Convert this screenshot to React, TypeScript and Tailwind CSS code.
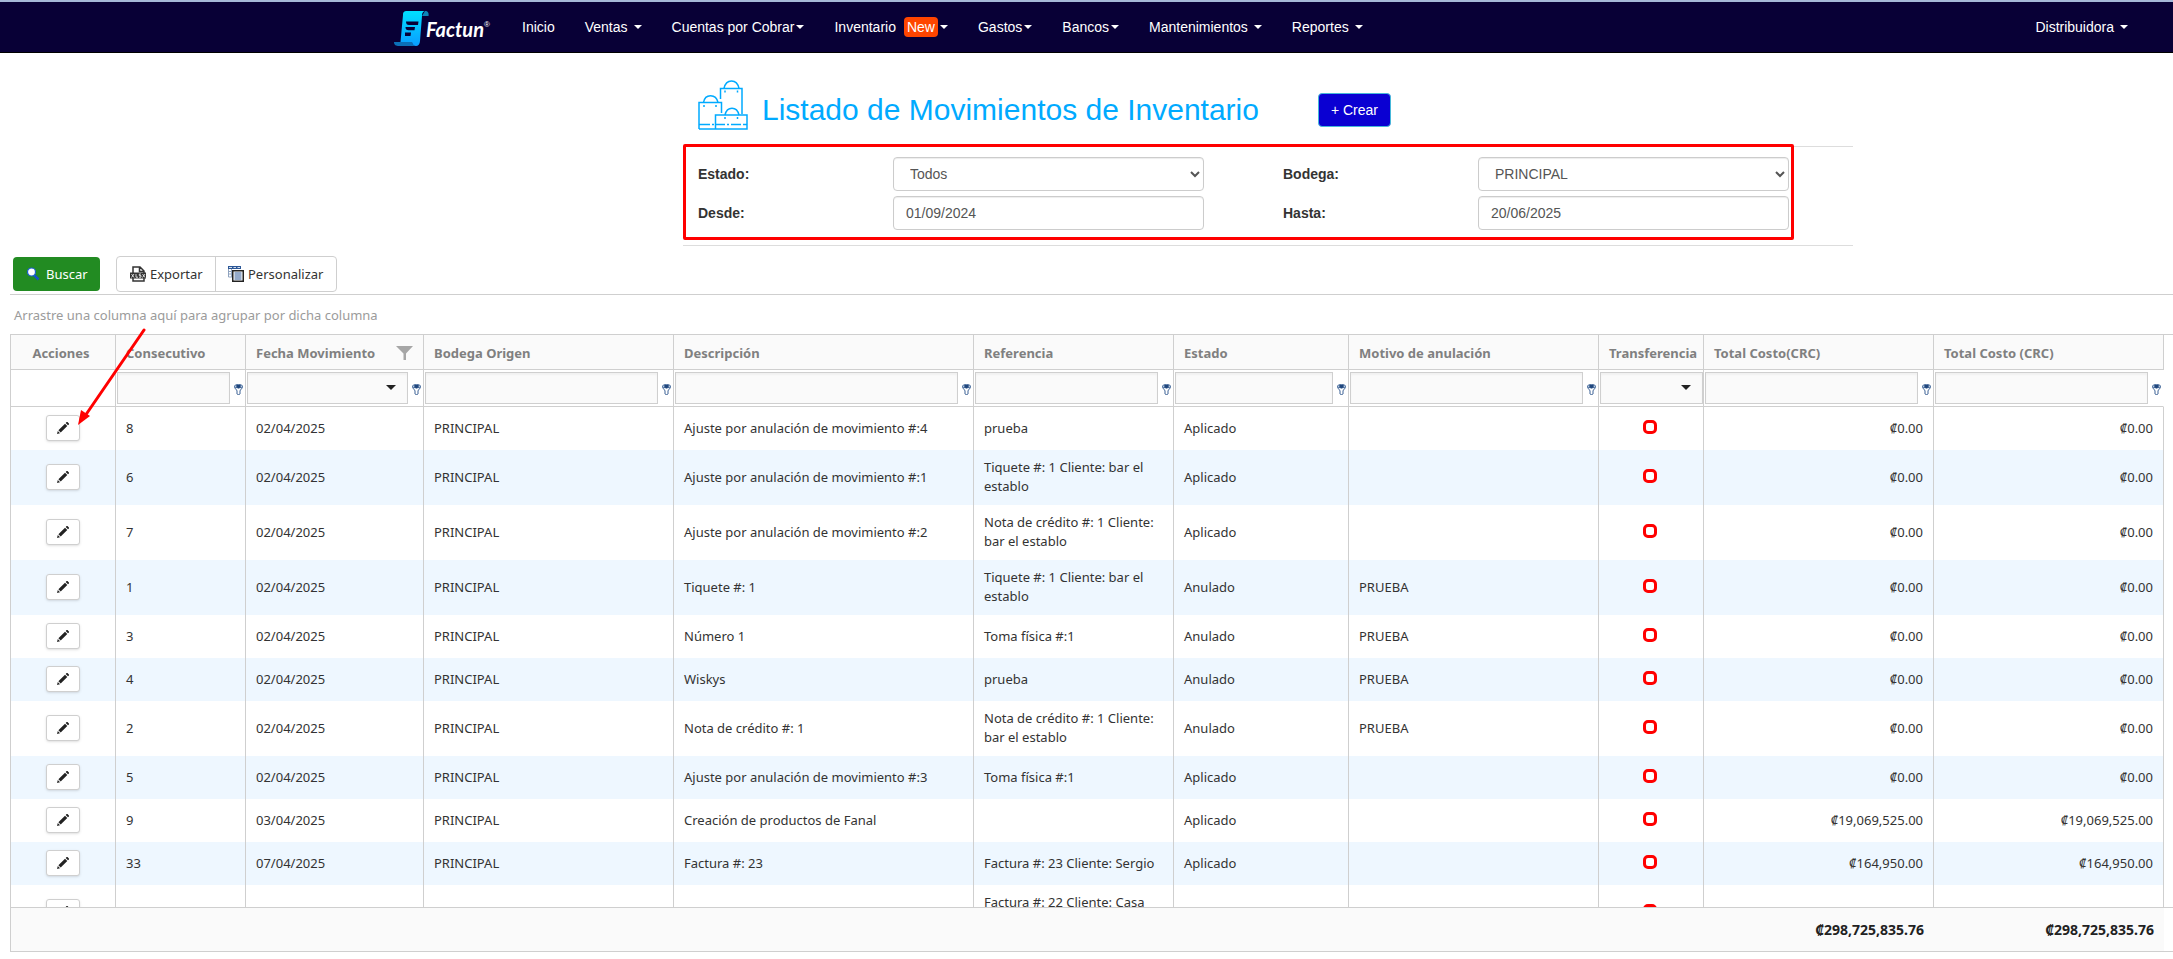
import { useState } from 'react';

interface NavItem {
  label: string;
  caret?: boolean;
  tight?: boolean;
  badge?: string;
}

interface Movement {
  id: number;
  date: string;
  description: string;
  reference: string;
  status: string;
  reason: string;
  total: string;
}

const navItems: NavItem[] = [
  { label: 'Inicio' },
  { label: 'Ventas', caret: true },
  { label: 'Cuentas por Cobrar', caret: true, tight: true },
  { label: 'Inventario', caret: true, tight: true, badge: 'New' },
  { label: 'Gastos', caret: true, tight: true },
  { label: 'Bancos', caret: true, tight: true },
  { label: 'Mantenimientos', caret: true },
  { label: 'Reportes', caret: true },
];

const columns = [
  { title: 'Acciones', filter: 'none' },
  { title: 'Consecutivo', filter: 'text' },
  { title: 'Fecha Movimiento', filter: 'date' },
  { title: 'Bodega Origen', filter: 'text' },
  { title: 'Descripción', filter: 'text' },
  { title: 'Referencia', filter: 'text' },
  { title: 'Estado', filter: 'text' },
  { title: 'Motivo de anulación', filter: 'text' },
  { title: 'Transferencia', filter: 'select' },
  { title: 'Total Costo(CRC)', filter: 'text' },
  { title: 'Total Costo (CRC)', filter: 'text' },
];

const movements: Movement[] = [
  { id: 8, date: '02/04/2025', description: 'Ajuste por anulación de movimiento #:4', reference: 'prueba', status: 'Aplicado', reason: '', total: '₡0.00' },
  { id: 6, date: '02/04/2025', description: 'Ajuste por anulación de movimiento #:1', reference: 'Tiquete #: 1 Cliente: bar el establo', status: 'Aplicado', reason: '', total: '₡0.00' },
  { id: 7, date: '02/04/2025', description: 'Ajuste por anulación de movimiento #:2', reference: 'Nota de crédito #: 1 Cliente: bar el establo', status: 'Aplicado', reason: '', total: '₡0.00' },
  { id: 1, date: '02/04/2025', description: 'Tiquete #: 1', reference: 'Tiquete #: 1 Cliente: bar el establo', status: 'Anulado', reason: 'PRUEBA', total: '₡0.00' },
  { id: 3, date: '02/04/2025', description: 'Número 1', reference: 'Toma física #:1', status: 'Anulado', reason: 'PRUEBA', total: '₡0.00' },
  { id: 4, date: '02/04/2025', description: 'Wiskys', reference: 'prueba', status: 'Anulado', reason: 'PRUEBA', total: '₡0.00' },
  { id: 2, date: '02/04/2025', description: 'Nota de crédito #: 1', reference: 'Nota de crédito #: 1 Cliente: bar el establo', status: 'Anulado', reason: 'PRUEBA', total: '₡0.00' },
  { id: 5, date: '02/04/2025', description: 'Ajuste por anulación de movimiento #:3', reference: 'Toma física #:1', status: 'Aplicado', reason: '', total: '₡0.00' },
  { id: 9, date: '03/04/2025', description: 'Creación de productos de Fanal', reference: '', status: 'Aplicado', reason: '', total: '₡19,069,525.00' },
  { id: 33, date: '07/04/2025', description: 'Factura #: 23', reference: 'Factura #: 23 Cliente: Sergio', status: 'Aplicado', reason: '', total: '₡164,950.00' },
  { id: 32, date: '07/04/2025', description: 'Factura #: 22', reference: 'Factura #: 22 Cliente: Casa Comercial', status: 'Aplicado', reason: '', total: '₡94,950.00' },
];

function Columns() {
  return (
    <colgroup>
      <col className="w-[105px]" />
      <col className="w-[130px]" />
      <col className="w-[178px]" />
      <col className="w-[250px]" />
      <col className="w-[300px]" />
      <col className="w-[200px]" />
      <col className="w-[175px]" />
      <col className="w-[250px]" />
      <col className="w-[105px]" />
      <col className="w-[230px]" />
      <col className="w-[230px]" />
    </colgroup>
  );
}

function Logo() {
  return (
    <svg className="h-9 w-9" viewBox="0 0 36 36" aria-hidden="true">
      <defs>
        <linearGradient id="paper" x1="0" y1="0" x2="0" y2="1">
          <stop offset="0" stopColor="#00e0ff" />
          <stop offset="1" stopColor="#0a9cff" />
        </linearGradient>
      </defs>
      <path d="M31 0c3 0 4 2 3.500 5H28z" fill="#0b86b8" />
      <path d="M0 31h18c0 2 2 4 4 4H5c-3 0-5-1-5-4z" fill="#0b6fb8" />
      <path d="M13 0h19c-3 0-4 2-4 5l-2 25c0 3-2 5-4 5s-4-2-4-4H6.500L9 4c0-3 1-4 4-4z" fill="url(#paper)" />
      <path d="M12 10.500h12.500l-.5 3.500H15c-2 0-3-1-3-3.500zM11.500 16H21l-.5 3.200h-6c-2 0-3-1-3-3.200zM11 21.500h6l-.5 3.500H11z" fill="#080036" />
    </svg>
  );
}

function BagsIcon() {
  return (
    <svg className="h-[50px] w-[50px]" viewBox="0 0 50 50" fill="none" stroke="#00aaff" strokeWidth="1.500" aria-hidden="true">
      <path d="M1 49V22.500h22.500V33M22.500 19V8.500H44V34M17.500 49V35H49v14zM1 49h17M1 44.500h11M14 44.500h2M18 44.500h9M29 44.500h2M33 44.500h10M45 44.500h4" />
      <path d="M5.500 22.500C7 13.500 18 13.500 20 22.500M26 8.500C28-1.500 39-1.500 41 8.500M27 35c2-9 12-9 14 0" />
      <path d="M6 25v2M18 25v2M27 10.500v2M39.500 10.500v2M27 37v2M39.500 37v2" />
    </svg>
  );
}

function Caret() {
  return (
    <svg className="h-1 w-2" viewBox="0 0 8 4" fill="currentColor" aria-hidden="true">
      <path d="M0 0h8L4 4z" />
    </svg>
  );
}

function SearchIcon() {
  return (
    <svg className="h-4 w-4" viewBox="0 0 16 16" aria-hidden="true">
      <path d="M9 9l4.500 4.500" stroke="#1553c8" strokeWidth="2.500" />
      <circle cx="6.500" cy="6" r="4" fill="#fff" stroke="#1b5fd0" strokeWidth="1.200" />
    </svg>
  );
}

function XlsxIcon() {
  return (
    <svg className="h-4 w-4" viewBox="0 0 16 16" aria-hidden="true">
      <path d="M3 7V1h7l4 4v2M3 12v3h11v-3M9.500 1v4.500H14" fill="none" stroke="#333" strokeWidth="1.500" />
      <path d="M0 6.500h16v6H0z" fill="#333" />
      <path d="M1.500 8l2.500 3.500M4 8l-2.500 3.500M6 8v3.200h2M11 8H9.300v1.600H11v1.600H9M12.500 8l2.500 3.500M15 8l-2.500 3.500" fill="none" stroke="#fff" strokeWidth=".8" />
    </svg>
  );
}

function ColumnsIcon() {
  return (
    <svg className="h-4 w-4" viewBox="0 0 16 16" aria-hidden="true">
      <path d="M0 0h13v3H0z" fill="#2b5797" />
      <path d="M1 1.500h3M5.500 1.500h2.500M9.500 1.500H12" stroke="#fff" strokeWidth=".8" />
      <path d="M.5 3v8H4M.5 5.500H4M.5 8H4M3.500 3v8" fill="none" stroke="#8fa3bf" />
      <path d="M4.750 4.750h10.500v10.500H4.750z" fill="#fff" stroke="#222" strokeWidth="1.500" />
      <path d="M6.500 7h7M6.500 9h7M6.500 11h7M6.500 13h7" stroke="#2b5797" />
    </svg>
  );
}

function PencilIcon() {
  return (
    <svg className="h-3 w-3" viewBox="0 0 12 12" fill="#222" aria-hidden="true">
      <path d="M0 12l.8-3 2.200 2.200zM1.400 8.300L8 1.700 10.300 4 3.700 10.600zM8.700 1l.9-.9c.3-.2.600-.2.900 0l1.400 1.400c.2.300.2.600 0 .9l-.9.900z" />
    </svg>
  );
}

function FunnelIcon() {
  return (
    <svg className="h-[14px] w-[17px]" viewBox="0 0 17 14" fill="#a6a6a6" aria-hidden="true">
      <path d="M0 0h17L10 7.500V14H7.500V7.500z" />
    </svg>
  );
}

function KeyFilterIcon() {
  return (
    <svg className="h-[11px] w-[9px]" viewBox="0 0 9 11" aria-hidden="true">
      <path d="M.5 2.500C.5 5 3 5.500 3 7v3c0 .7 3 .7 3 0V7c0-1.500 2.500-2 2.500-4.500z" fill="#fff" stroke="#3d6396" />
      <ellipse cx="4.500" cy="2.200" rx="4" ry="1.700" fill="#dce6f2" stroke="#3d6396" />
      <path d="M2.300 1h4.400v2L4.500 4.500 2.300 3z" fill="#1f467d" />
    </svg>
  );
}

function FilterCell({ title, kind }: { title: string; kind: string }) {
  if (kind === 'none') return null;

  const box = 'h-8 w-full min-w-0 appearance-none rounded-none border border-[#cfcfcf] bg-[#fafafa] px-2 shadow-[inset_0_2px_2px_rgba(0,0,0,0.04)] outline-none';

  return (
    <div className="flex items-center pl-px">
      <div className="relative min-w-0 flex-1">
        {kind === 'text' ? (
          <input type="text" aria-label={`Filtrar ${title}`} className={box} />
        ) : (
          <>
            <select aria-label={`Filtrar ${title}`} className={box}>
              <option></option>
            </select>
            <svg className="pointer-events-none absolute top-[13px] right-3 h-[5px] w-[10px]" viewBox="0 0 10 5" fill="#222" aria-hidden="true">
              <path d="M0 0h10L5 5z" />
            </svg>
          </>
        )}
      </div>
      {kind !== 'select' && (
        <button type="button" aria-label={`Condición de ${title}`} className="flex w-[15px] justify-end pt-[2px] pr-[2px]">
          <KeyFilterIcon />
        </button>
      )}
    </div>
  );
}

export default function App() {
  const [status, setStatus] = useState('Todos');
  const [warehouse, setWarehouse] = useState('PRINCIPAL');
  const [from, setFrom] = useState('01/09/2024');
  const [to, setTo] = useState('20/06/2025');

  const field = 'h-[34px] w-[311px] rounded border border-[#ccc] bg-white px-3 text-[#555] shadow-[inset_0_1px_1px_rgba(0,0,0,0.075)]';
  const cell = 'border-r border-[#cfcfcf] px-[10px] pt-2 pb-[9px]';

  return (
    <div className="relative min-h-screen overflow-hidden bg-white font-['Liberation_Sans',Arial,sans-serif] text-sm text-[#333]">
      {/* Navbar */}
      <header className="border-t-2 border-[#a5b8d8]">
        <nav className="flex h-[51px] items-center border-b border-black bg-[#080036] pr-[45px] pl-[394px] text-white">
          <a href="#" className="flex w-[128px] items-center pt-1">
            <Logo />
            <span className="-ml-1 font-['Lato',sans-serif] text-xl leading-6 font-bold italic">
              Factun
            </span>
            <span className="mb-2 text-[8px]">®</span>
          </a>
          <ul className="flex flex-1 items-center gap-[30px]">
            {navItems.map((item) => (
              <li key={item.label}>
                <a href="#" className="flex items-center whitespace-nowrap">
                  {item.label}
                  {item.badge && (
                    <span className="ml-2 rounded bg-[#ff4500] px-[3px] leading-5">{item.badge}</span>
                  )}
                  {item.caret && (
                    <span className={item.tight ? 'ml-[2px]' : 'ml-[6px]'}>
                      <Caret />
                    </span>
                  )}
                </a>
              </li>
            ))}
          </ul>
          <a href="#" className="flex items-center gap-[6px]">
            Distribuidora
            <Caret />
          </a>
        </nav>
      </header>

      {/* Title and search form */}
      <div className="ml-[683px] max-w-[1170px]">
        <div className="flex h-[93px] items-end pb-4 pl-[15px]">
          <BagsIcon />
          <h1 className="ml-[14px] text-[30px] leading-10 text-[#00aaff]">Listado de Movimientos de Inventario</h1>
          <button type="button" className="mb-[3px] ml-[59px] h-[34px] w-[73px] rounded border border-[#46b8da] bg-[#0a00d2] text-white">
            + Crear
          </button>
        </div>
        <form className="relative border-y border-[#ddd] py-[10px]">
          <div className="grid grid-cols-[1fr_2fr_1fr_2fr] items-center gap-y-[5px] *:ml-[15px]">
            <label htmlFor="status" className="font-bold">Estado:</label>
            <select id="status" value={status} onChange={(e) => setStatus(e.target.value)} className={field}>
              <option>Todos</option>
              <option>Aplicado</option>
              <option>Anulado</option>
            </select>
            <label htmlFor="warehouse" className="font-bold">Bodega:</label>
            <select id="warehouse" value={warehouse} onChange={(e) => setWarehouse(e.target.value)} className={field}>
              <option>PRINCIPAL</option>
            </select>
            <label htmlFor="from" className="font-bold">Desde:</label>
            <input id="from" type="text" value={from} onChange={(e) => setFrom(e.target.value)} className={field} />
            <label htmlFor="to" className="font-bold">Hasta:</label>
            <input id="to" type="text" value={to} onChange={(e) => setTo(e.target.value)} className={field} />
          </div>
          <div className="h-[5px]"></div>
          <div className="pointer-events-none absolute -top-[3px] left-0 h-24 w-[1111px] rounded-xs border-3 border-[#ff0000]"></div>
        </form>
      </div>

      <div className="ml-[10px] font-['Noto_Sans',sans-serif] text-[13px] leading-[19px]">
        {/* Toolbar */}
        <div className="flex items-center border-b border-[#cfcfcf] pt-[10px] pb-[2px] pl-[3px]">
          <button type="button" className="flex h-[34px] w-[87px] items-center rounded bg-[#228b22] pl-3 text-white">
            <SearchIcon />
            <span className="ml-[5px]">Buscar</span>
          </button>
          <div className="ml-4 flex h-9 rounded border border-[#cfcfcf]">
            <button type="button" className="flex w-[99px] items-center gap-1 border-r border-[#cfcfcf] pl-[13px]">
              <XlsxIcon />
              Exportar
            </button>
            <button type="button" className="flex w-[120px] items-center gap-1 pl-3">
              <ColumnsIcon />
              Personalizar
            </button>
          </div>
        </div>
        <p className="pt-[11px] pb-[9px] pl-1 text-[#9b9b9b]">Arrastre una columna aquí para agrupar por dicha columna</p>

        {/* Grid */}
        <div className="border-y border-l border-[#cfcfcf]">
          <div className="pr-[9px]">
            <table className="w-full table-fixed border-separate border-spacing-0">
              <Columns />
              <thead>
                <tr>
                  {columns.map((col) => (
                    <th key={col.title} className="h-[35px] border-r border-b border-[#cfcfcf] bg-[#fafafa] p-0 pt-[2px] text-left font-bold whitespace-nowrap text-[#808080]">
                      {col.filter === 'none' ? (
                        <div className="pr-1 text-center">{col.title}</div>
                      ) : (
                        <div className="flex items-center justify-between px-[10px]">
                          {col.title}
                          {col.filter === 'date' && <FunnelIcon />}
                        </div>
                      )}
                    </th>
                  ))}
                </tr>
                <tr>
                  {columns.map((col) => (
                    <td key={col.title} className="h-[37px] border-r border-b border-[#cfcfcf] p-0 last:border-r-transparent">
                      <FilterCell title={col.title} kind={col.filter} />
                    </td>
                  ))}
                </tr>
              </thead>
            </table>
          </div>
          <div className="h-[500px] overflow-hidden pr-[9px]">
            <table className="w-full table-fixed border-separate border-spacing-0">
              <Columns />
              <tbody>
                {movements.map((row) => (
                  <tr key={row.id} className="even:bg-[#eef7ff]">
                    <td className="border-r border-[#cfcfcf] pt-2 pb-[9px]">
                      <button type="button" aria-label={`Editar ${row.id}`} className="mx-auto flex h-[26px] w-[34px] items-center justify-center rounded-[3px] border border-[#cfcfcf] bg-white shadow-sm">
                        <PencilIcon />
                      </button>
                    </td>
                    <td className={cell}>{row.id}</td>
                    <td className={cell}>{row.date}</td>
                    <td className={cell}>PRINCIPAL</td>
                    <td className={cell}>{row.description}</td>
                    <td className={cell}>{row.reference}</td>
                    <td className={cell}>{row.status}</td>
                    <td className={cell}>{row.reason}</td>
                    <td className="border-r border-[#cfcfcf] pr-[2px] pb-[3px]">
                      <input type="checkbox" aria-label={`Transferencia ${row.id}`} className="mx-auto block h-[14px] w-[14px] appearance-none rounded-[5px] border-3 border-[#ff0000] bg-white" />
                    </td>
                    <td className={`${cell} text-right`}>{row.total}</td>
                    <td className={`${cell} text-right`}>{row.total}</td>
                  </tr>
                ))}
              </tbody>
            </table>
          </div>
          <div className="border-t border-[#cfcfcf] pr-[9px]">
            <table className="w-full table-fixed border-separate border-spacing-0 bg-[#fafafa]">
              <Columns />
              <tbody>
                <tr>
                  <td colSpan={9} className="h-[43px]"></td>
                  <td className="pr-[10px] text-right text-sm font-bold text-[#222]">₡298,725,835.76</td>
                  <td className="pr-[10px] text-right text-sm font-bold text-[#222]">₡298,725,835.76</td>
                </tr>
              </tbody>
            </table>
          </div>
        </div>
      </div>

      {/* Arrow pointing at the edit button */}
      <svg className="pointer-events-none absolute top-[328px] left-[76px] h-[98px] w-[70px]" viewBox="0 0 70 98" fill="#ff0000" aria-hidden="true">
        <path d="M68 2L9 88" stroke="#ff0000" strokeWidth="3" strokeLinecap="round" />
        <path d="M2 97L5 82l9 6z" />
      </svg>
    </div>
  );
}
